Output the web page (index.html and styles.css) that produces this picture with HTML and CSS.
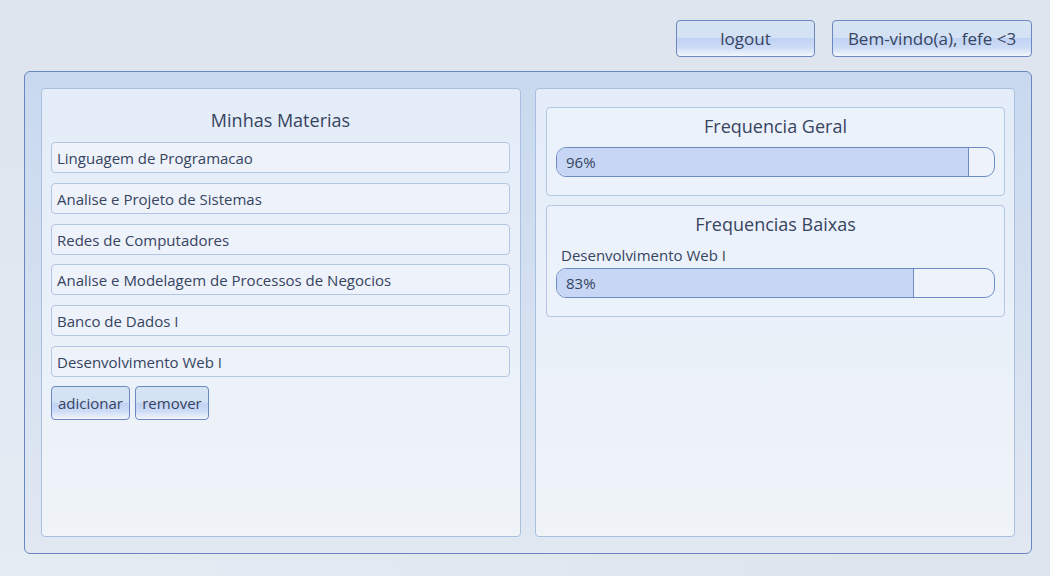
FILE: index.html
```html
<!DOCTYPE html>
<html lang="pt">
<head>
<meta charset="utf-8">
<title>Minhas Materias</title>
<link rel="stylesheet" href="styles.css">
</head>
<body>
<div class="page">
  <header class="topbar">
    <button class="btn btn-lg btn-logout">logout</button>
    <button class="btn btn-lg btn-welcome">Bem-vindo(a), fefe &lt;3</button>
  </header>
  <main class="frame">
    <section class="panel panel-left">
      <h2 class="title">Minhas Materias</h2>
      <ul class="list">
        <li class="item">Linguagem de Programacao</li>
        <li class="item">Analise e Projeto de Sistemas</li>
        <li class="item">Redes de Computadores</li>
        <li class="item">Analise e Modelagem de Processos de Negocios</li>
        <li class="item">Banco de Dados I</li>
        <li class="item">Desenvolvimento Web I</li>
      </ul>
      <div class="actions">
        <button class="btn btn-sm btn-add">adicionar</button>
        <button class="btn btn-sm btn-remove">remover</button>
      </div>
    </section>
    <section class="panel panel-right">
      <div class="card card-geral">
        <h3 class="card-title">Frequencia Geral</h3>
        <div class="bar"><div class="fill" style="width: 94.3%"><span class="bar-text">96%</span></div></div>
      </div>
      <div class="card card-baixas">
        <h3 class="card-title">Frequencias Baixas</h3>
        <div class="label">Desenvolvimento Web I</div>
        <div class="bar"><div class="fill" style="width: 81.7%"><span class="bar-text">83%</span></div></div>
      </div>
    </section>
  </main>
</div>
</body>
</html>
```

FILE: styles.css
```css
html, body {
  margin: 0;
  padding: 0;
}
body {
  width: 1050px;
  height: 576px;
  overflow: hidden;
  background: radial-gradient(ellipse at 0% 100%, #e6ecf4 0%, #dfe5ee 60%), #dfe5ee;
  font-family: "Open Sans", "Noto Sans", sans-serif;
  color: #37445f;
}
.page {
  padding: 20px 18px 0 24px;
  display: flex;
  flex-direction: column;
}
.topbar {
  display: flex;
  justify-content: flex-end;
  gap: 17px;
  height: 37px;
  margin-bottom: 14px;
}
.btn {
  font-family: inherit;
  color: #37445f;
  border: 1px solid #6d88c0;
  border-radius: 4px;
  background: linear-gradient(to bottom, #d6e4f4 0%, #d3e2f4 48%, #c1d3f4 50%, #ccdbf6 75%, #f3f6fc 100%);
  padding: 0;
  cursor: pointer;
}
.btn-lg {
  height: 37px;
  font-size: 17px;
}
.btn-logout { width: 139px; }
.btn-welcome { width: 200px; }
.frame {
  height: 483px;
  box-sizing: border-box;
  border: 1px solid #6a86c0;
  border-radius: 6px;
  background: linear-gradient(to bottom, #c8d9ef 0%, #d6e1f0 55%, #e1e8f2 100%);
  padding: 16px;
  display: flex;
  gap: 14px;
}
.panel {
  box-sizing: border-box;
  height: 449px;
  border: 1px solid #a9bfe0;
  border-radius: 4px;
  background: linear-gradient(to bottom, #e3ecf8 0%, #ebf1f9 60%, #f0f4f9 100%);
}
.panel-left {
  width: 480px;
  padding: 19px 10px 0 9px;
}
.panel-right {
  width: 480px;
  padding: 18px 9px 0 10px;
  display: flex;
  flex-direction: column;
  gap: 9px;
}
.title {
  margin: 0 0 10px;
  font-size: 18px;
  font-weight: normal;
  line-height: 24px;
  text-align: center;
}
.list {
  list-style: none;
  margin: 0;
  padding: 0;
  display: flex;
  flex-direction: column;
  gap: 9.8px;
}
.item {
  box-sizing: border-box;
  height: 31px;
  border: 1px solid #b3c6e3;
  border-radius: 4px;
  background: #edf2fb;
  font-size: 15px;
  line-height: 30px;
  padding: 0 5px;
  white-space: nowrap;
}
.actions {
  display: flex;
  gap: 5px;
  margin-top: 9px;
}
.btn-sm {
  height: 34px;
  font-size: 15px;
}
.btn-add { width: 79px; }
.btn-remove { width: 74px; }
.card {
  box-sizing: border-box;
  border: 1px solid #b3c6e3;
  border-radius: 4px;
  background: #ecf2fc;
  padding: 6px 9px 18px;
}
.card-title {
  margin: 0 0 9px;
  font-size: 18px;
  font-weight: normal;
  line-height: 24px;
  text-align: center;
}
.label {
  font-size: 15px;
  line-height: 20px;
  padding-left: 5px;
  margin-top: 3px;
  margin-bottom: 3px;
}
.bar {
  box-sizing: border-box;
  height: 30px;
  border: 1px solid #6d8cc6;
  border-radius: 10px;
  background: #eef3fb;
  overflow: hidden;
}
.fill {
  box-sizing: border-box;
  height: 100%;
  background: #c6d6f4;
  border-right: 1px solid #6d8cc6;
  padding-left: 9px;
  font-size: 15px;
  line-height: 28px;
  white-space: nowrap;
}
```
